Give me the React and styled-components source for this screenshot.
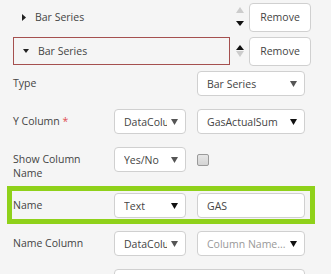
import React from 'react';
import styled, {createGlobalStyle} from 'styled-components';

const Global = createGlobalStyle`
  html, body {
    margin: 0;
    padding: 0;
    background: #f5f5f5;
  }
  body {
    font-family: "Open Sans", "Noto Sans", sans-serif;
    font-size: 10.5px;
    color: #444;
    width: 331px;
    height: 274px;
    overflow: hidden;
  }
`;

const Page = styled.div`
  padding: 3px 0 0 13px;
`;

const SeriesRow = styled.div`
  display: flex;
  align-items: center;
  height: 28px;
  margin-bottom: 6px;
`;

const SeriesHead = styled.div`
  width: 217px;
  height: 28px;
  box-sizing: border-box;
  display: flex;
  align-items: center;
  gap: 9px;
  padding-left: ${p => (p.open ? '9px' : '8px')};
  border: 1px solid ${p => (p.open ? '#a5504f' : 'transparent')};
`;

const Arrows = styled.div`
  width: 19px;
  height: 28px;
  display: flex;
  flex-direction: column;
  align-items: center;
  justify-content: ${p => (p.tight ? 'center' : 'space-between')};
  padding: ${p => (p.tight ? '0' : '4px 0 5px')};
  box-sizing: border-box;
  gap: ${p => (p.tight ? '1px' : '0')};
`;

const RemoveButton = styled.button`
  width: 62px;
  height: 29px;
  border: 1px solid #d0d0d0;
  border-radius: 4px;
  background: #fff;
  font: inherit;
  color: #444;
  padding: 0;
`;

const Form = styled.div`
  margin-top: 2px;
  width: 292px;
`;

const FormRow = styled.div`
  position: relative;
  display: grid;
  grid-template-columns: 90px 72px 108px;
  column-gap: 11px;
  align-items: start;
  margin-bottom: 13px;

  ${p => p.highlight && `
    &::after {
      content: '';
      position: absolute;
      top: -7px;
      left: -6px;
      right: -10px;
      bottom: -6px;
      border: 5px solid #8fd11a;
      pointer-events: none;
    }
  `}
`;

const Label = styled.div`
  padding-top: 5px;
  line-height: 14px;
  min-height: 20px;
`;

const Required = styled.span`
  color: #e05050;
`;

const Select = styled.div`
  grid-column: ${p => p.span || 'auto'};
  height: 25px;
  box-sizing: border-box;
  border: 1px solid #d0d0d0;
  border-radius: 4px;
  background: #fff;
  display: flex;
  align-items: center;
  padding: 0 7px 0 9px;
  gap: 4px;
`;

const SelectText = styled.span`
  flex: 1;
  white-space: nowrap;
  overflow: hidden;
  text-overflow: ${p => (p.placeholder ? 'ellipsis' : 'clip')};
  color: ${p => (p.placeholder ? '#999' : '#444')};
`;

const Input = styled.div`
  height: 25px;
  box-sizing: border-box;
  border: 1px solid #d0d0d0;
  border-radius: 4px;
  background: #fff;
  display: flex;
  align-items: center;
  padding-left: 9px;
`;

const Check = styled.div`
  width: 12px;
  height: 12px;
  margin-top: 7px;
  box-sizing: border-box;
  border: 1px solid #9a9a9a;
  border-radius: 2px;
  background: linear-gradient(#e6e6e6, #d4d4d4);
`;

const Tri = ({dir, color = '#222', w = 7, h = 4}) => {
  const pts = {
    up: `0,${h} ${w / 2},0 ${w},${h}`,
    down: `0,0 ${w},0 ${w / 2},${h}`,
    right: `0,0 ${w},${h / 2} 0,${h}`,
  }[dir];
  return (
    <svg width={w} height={h} viewBox={`0 0 ${w} ${h}`} style={{display: 'block', flex: 'none'}}>
      <polygon points={pts} fill={color}/>
    </svg>
  );
};

const Caret = ({dark}) => <Tri dir="down" w={7} h={6} color={dark ? '#111' : '#555'}/>;

const Dropdown = ({children, dark, placeholder, span}) => (
  <Select span={span}>
    <SelectText placeholder={placeholder ? 1 : 0}>{children}</SelectText>
    <Caret dark={dark}/>
  </Select>
);

export default function App() {
  return (
    <Page>
      <Global/>
      <SeriesRow>
        <SeriesHead>
          <Tri dir="right" w={4} h={7} color="#222"/>
          <span>Bar Series</span>
        </SeriesHead>
        <Arrows>
          <Tri dir="up" w={8} h={6} color="#ccc"/>
          <Tri dir="down" w={8} h={5} color="#111"/>
        </Arrows>
        <RemoveButton>Remove</RemoveButton>
      </SeriesRow>

      <SeriesRow>
        <SeriesHead open>
          <Tri dir="down" w={6} h={4} color="#222"/>
          <span>Bar Series</span>
        </SeriesHead>
        <Arrows tight>
          <Tri dir="up" w={8} h={5} color="#111"/>
          <Tri dir="down" w={8} h={6} color="#ccc"/>
        </Arrows>
        <RemoveButton>Remove</RemoveButton>
      </SeriesRow>

      <Form>
        <FormRow>
          <Label>Type</Label>
          <span/>
          <Dropdown>Bar Series</Dropdown>
        </FormRow>

        <FormRow>
          <Label>Y Column <Required>*</Required></Label>
          <Dropdown>DataColumn</Dropdown>
          <Dropdown dark>GasActualSum</Dropdown>
        </FormRow>

        <FormRow>
          <Label>Show Column<br/>Name</Label>
          <Dropdown>Yes/No</Dropdown>
          <Check/>
        </FormRow>

        <FormRow highlight>
          <Label>Name</Label>
          <Dropdown dark>Text</Dropdown>
          <Input>GAS</Input>
        </FormRow>

        <FormRow>
          <Label>Name Column</Label>
          <Dropdown>DataColumn</Dropdown>
          <Dropdown dark placeholder>Column Name...</Dropdown>
        </FormRow>

        <FormRow>
          <span/>
          <Select span="2 / 4"/>
        </FormRow>
      </Form>
    </Page>
  );
}
